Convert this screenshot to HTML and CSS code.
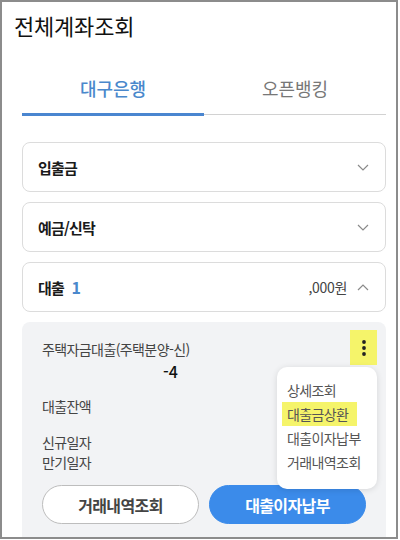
FILE: index.html
```html
<!DOCTYPE html>
<html lang="ko">
<head>
<meta charset="utf-8">
<link rel="stylesheet" href="styles.css">
</head>
<body>
<div class="frame">
  <h1 class="title">전체계좌조회</h1>
  <div class="tabs">
    <div class="tab active">대구은행</div>
    <div class="tab">오픈뱅킹</div>
  </div>
  <div class="list">
    <div class="card">
      <span class="card-label">입출금</span>
      <svg class="chev" width="12" height="7" viewBox="0 0 12 7"><path d="M1 1l5 5 5-5" fill="none" stroke="#8a8a8a" stroke-width="1.2"/></svg>
    </div>
    <div class="card">
      <span class="card-label">예금/신탁</span>
      <svg class="chev" width="12" height="7" viewBox="0 0 12 7"><path d="M1 1l5 5 5-5" fill="none" stroke="#8a8a8a" stroke-width="1.2"/></svg>
    </div>
    <div class="card">
      <span class="card-label">대출 <span class="count">1</span></span>
      <span class="sum">,000원</span>
      <svg class="chev" width="12" height="7" viewBox="0 0 12 7"><path d="M1 6l5-5 5 5" fill="none" stroke="#8a8a8a" stroke-width="1.2"/></svg>
    </div>
    <div class="panel">
      <div class="panel-head">
        <div class="head-text">
          <div class="loan-name">주택자금대출(주택분양-신)</div>
          <div class="acct">-4</div>
        </div>
        <div class="kebab">
          <svg width="6" height="18" viewBox="0 0 6 18"><circle cx="3" cy="3" r="1.9" fill="#222"/><circle cx="3" cy="9" r="1.9" fill="#222"/><circle cx="3" cy="15" r="1.9" fill="#222"/></svg>
        </div>
      </div>
      <div class="row balance">대출잔액</div>
      <div class="row dates">신규일자</div>
      <div class="row">만기일자</div>
      <div class="buttons">
        <button class="btn outline">거래내역조회</button>
        <button class="btn primary">대출이자납부</button>
      </div>
      <ul class="menu">
        <li>상세조회</li>
        <li class="hl">대출금상환</li>
        <li>대출이자납부</li>
        <li>거래내역조회</li>
      </ul>
    </div>
  </div>
</div>
</body>
</html>
```
FILE: styles.css
```css
* { box-sizing: border-box; }
html, body { margin: 0; padding: 0; background: #fff; }
body {
  font-family: "Noto Sans CJK KR", "Noto Sans", sans-serif;
  color: #222;
  width: 400px;
  height: 540px;
  overflow: hidden;
}
.frame {
  width: 398px;
  height: 539px;
  border: 2px solid #8c8c8c;
  overflow: hidden;
}
.title {
  margin: 0;
  padding: 7px 0 0 12px;
  font-size: 22px;
  line-height: 32px;
  font-weight: 400;
  letter-spacing: -0.2px;
  color: #111;
}
.tabs {
  display: flex;
  align-items: flex-end;
  margin: 25px 10px 0 20px;
}
.tab {
  flex: 1;
  text-align: center;
  font-size: 18px;
  line-height: 44px;
  padding-bottom: 4px;
  letter-spacing: 0;
  color: #777;
  border-bottom: 1px solid #d2d2d2;
  margin-bottom: 1px;
}
.tab.active {
  color: #4a88cc;
  font-weight: 500;
  border-bottom: 3px solid #4a86d0;
  margin-bottom: 0;
  padding-bottom: 3px;
}
.list {
  margin: 26px 10px 0 20px;
  display: flex;
  flex-direction: column;
  gap: 10px;
}
.card {
  height: 50px;
  border: 1px solid #dcdcdc;
  border-radius: 8px;
  display: flex;
  align-items: center;
  padding: 0 16px 0 15px;
}
.card-label {
  font-size: 15px;
  font-weight: 700;
  letter-spacing: -0.8px;
  color: #1a1a1a;
  flex: 1;
}
.count {
  color: #4a88cc;
  font-weight: 600;
  margin-left: 4px;
  font-size: 16px;
}
.sum {
  font-size: 14px;
  color: #444;
  margin-right: 10px;
  letter-spacing: -0.3px;
}
.chev { display: block; }
.panel {
  position: relative;
  background: #f2f3f5;
  border-radius: 8px 8px 0 0;
  padding: 8px 20px 20px 20px;
  height: 240px;
}
.panel-head {
  display: flex;
  align-items: flex-start;
}
.head-text {
  flex: 1;
  padding-top: 9px;
}
.loan-name {
  font-size: 14px;
  line-height: 20px;
  color: #444;
  letter-spacing: -0.6px;
}
.acct {
  font-size: 16px;
  line-height: 20px;
  margin-top: 2px;
  padding-left: 121px;
  font-weight: 500;
  color: #111;
}
.kebab {
  width: 27px;
  height: 35px;
  background: #f5f46a;
  margin-right: -11px;
  display: flex;
  align-items: center;
  justify-content: center;
}
.row {
  font-size: 14px;
  line-height: 20px;
  color: #444;
  letter-spacing: -0.6px;
}
.balance { margin-top: 15px; }
.dates { margin-top: 16px; }
.buttons {
  display: grid;
  grid-template-columns: 1fr 1fr;
  gap: 10px;
  margin-top: 13px;
}
.btn {
  height: 39px;
  border-radius: 20px;
  font-family: inherit;
  font-size: 16px;
  font-weight: 700;
  letter-spacing: -0.6px;
}
.btn.outline {
  background: #fff;
  border: 1px solid #bdbdbd;
  color: #444;
}
.btn.primary {
  background: #3b8bea;
  border: 1px solid #3b8bea;
  color: #fff;
}
.menu {
  position: absolute;
  left: 255px;
  top: 45px;
  width: 100px;
  height: 122px;
  margin: 0;
  padding: 11px 0 0 0;
  list-style: none;
  background: #fff;
  border-radius: 10px;
  box-shadow: 0 1px 6px rgba(0,0,0,0.12);
}
.menu li {
  font-size: 14px;
  line-height: 24px;
  padding-left: 10px;
  color: #555;
  letter-spacing: -0.6px;
}
.menu li.hl {
  background: #f5f46a;
  margin: 0 20px 0 5px;
  padding-left: 5px;
  line-height: 24px;
}
```
